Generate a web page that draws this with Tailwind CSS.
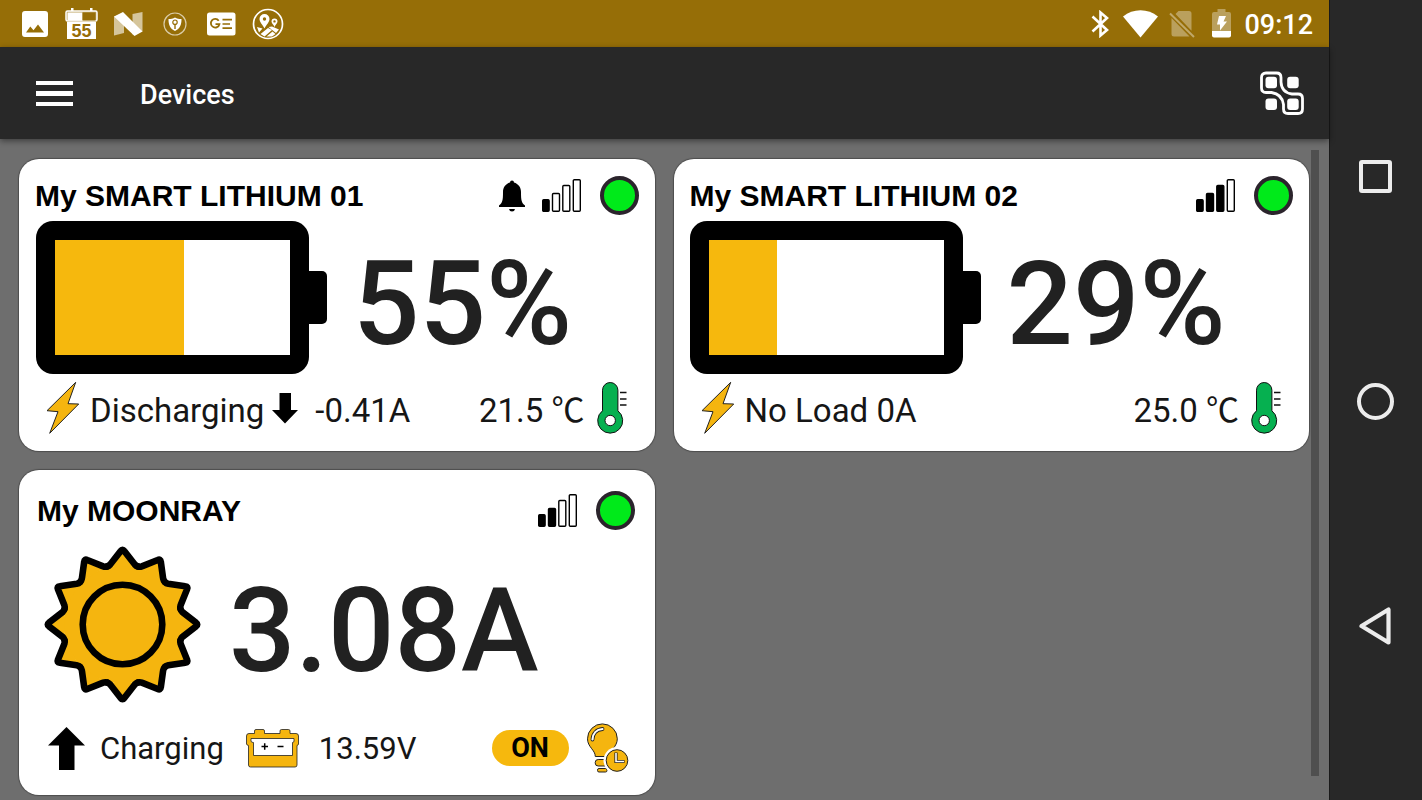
<!DOCTYPE html>
<html lang="en">
<head>
<meta charset="utf-8">
<meta name="viewport" content="width=device-width, initial-scale=1">
<title>Devices</title>
<script src="https://cdn.jsdelivr.net/npm/@tailwindcss/browser@4"></script>
</head>
<body class="flex h-screen overflow-hidden bg-[#282828] font-['Roboto','Noto_Sans_CJK_SC',sans-serif] text-[#161616]">

<!-- Shared symbols -->
<svg class="hidden" aria-hidden="true">
  <symbol id="bolt" viewBox="0 0 34 54"><path d="M29.7 1.3 22 22.7l10.7.3L3.7 52.3 12 30.7 1 29.7Z" fill="#f5b50f" stroke="#222" stroke-width="1"/></symbol>
  <symbol id="thermo" viewBox="0 0 31 52">
    <path d="M5.5 8.2a7.7 7.7 0 0 1 15.4 0V28.8a12.5 12.5 0 1 1-15.4 0Z" fill="#06b050" stroke="#111" stroke-width="1"/>
    <circle cx="13.2" cy="38.5" r="5.2" fill="#fff" stroke="#111" stroke-width="1"/>
    <path d="M23 10.5h6.500M23 17h6.500M23 23h6.500" stroke="#111" stroke-width="1.400"/>
  </symbol>
  <path id="ray" d="M-15.500-58Q-13.600-58.500-12.300-60L-1.800-73.500Q0-76 1.800-73.500L12.300-60Q13.600-58.500 15.500-58"/>
  <g id="rays3"><use href="#ray"/><use href="#ray" transform="rotate(30)"/><use href="#ray" transform="rotate(60)"/></g>
</svg>

<div class="flex min-w-0 flex-1 flex-col">

  <!-- Status bar -->
  <div class="flex h-[47px] shrink-0 items-center justify-between bg-[#966e07] pr-4 pl-[22px] text-white">
    <div class="flex items-center">
      <svg class="h-[26px] w-[26px]" viewBox="0 0 26 26"><path fill="#fff" fill-rule="evenodd" d="M3 0h20a3 3 0 0 1 3 3v20a3 3 0 0 1-3 3H3a3 3 0 0 1-3-3V3a3 3 0 0 1 3-3ZM4 21.500h18L16 13.500l-4.500 5.800-3.200-3.900Z"/></svg>
      <svg class="ml-[17px] h-8 w-[33px]" viewBox="0 0 33 32">
        <path d="M6 0h2.500v3H6ZM25 0h2.500v3H25Z" fill="#fff"/>
        <rect x="1" y="3" width="31" height="10" rx="1.500" fill="#fff" fill-opacity=".35" stroke="#fff" stroke-width="1.500"/>
        <rect x="2.500" y="4.500" width="15" height="8" fill="#fff"/><rect x="17.500" y="4.500" width="13" height="8" fill="#966e07"/>
        <rect x="2" y="14" width="29" height="17" fill="#fff"/>
        <text x="16.500" y="29" text-anchor="middle" font-family="Liberation Sans" font-weight="700" font-size="18" fill="#966e07">55</text>
      </svg>
      <svg class="ml-4 h-6 w-[29px]" viewBox="0 0 29 24"><path d="M0 4.500 10 2v19L0 23.500ZM18.500 2 28.500 0v19.500l-10 3Z" fill="#fff" fill-opacity=".6"/><path d="M0 4.500 9 0 28.500 19.500 20.500 24Z" fill="#fff"/></svg>
      <svg class="ml-5 h-6 w-6" viewBox="0 0 24 24"><circle cx="12" cy="12" r="11" fill="none" stroke="#fff" stroke-opacity=".65" stroke-width="1.200"/><path d="M12 5.500c2 1.300 4 1.500 6.500 1.500 0 6-1.500 9.500-6.500 12C7 16.500 5.500 13 5.500 7 8 7 10 6.800 12 5.500Z" fill="#fff"/><circle cx="12" cy="10.200" r="2.200" fill="none" stroke="#966e07" stroke-width="1.200"/><path d="M12 12.500V17" stroke="#966e07" stroke-width="1.400"/></svg>
      <svg class="ml-5 h-6 w-[29px]" viewBox="0 0 29 24"><rect y=".5" width="28.500" height="23" rx="2.500" fill="#fff"/><path d="M11.700 8.700A4.300 4.300 0 1 0 12.400 12.200H8.500" fill="none" stroke="#966e07" stroke-width="1.800"/><path d="M15.500 7.700h9.500M15.500 12h7.500M15.500 16.200h9.500" stroke="#966e07" stroke-width="1.700"/></svg>
      <svg class="ml-4 h-8 w-8" viewBox="0 0 32 32"><circle cx="16" cy="16" r="14.500" fill="none" stroke="#fff" stroke-width="1.700"/><path fill="#fff" fill-rule="evenodd" d="M12.500 6a5 5 0 0 1 5 5c0 3-3 5.500-5 9.500C10.500 16.500 7.500 14 7.500 11a5 5 0 0 1 5-5Zm0 3.300a1.700 1.700 0 1 0 0 3.400 1.700 1.700 0 0 0 0-3.400Z"/><path fill="#fff" fill-rule="evenodd" d="M22.500 10.500a3 3 0 0 1 3 3c0 1.800-2 3-3 5.500-1-2.500-3-3.700-3-5.500a3 3 0 0 1 3-3Zm0 1.700a1.200 1.200 0 1 0 0 2.400 1.200 1.200 0 0 0 0-2.400Z"/><path d="M5 19l5.500 1.500L7 24.500ZM8.500 26l7.500-6 4 2-7.500 6.500ZM16.500 19l3.500-.500 7 3-3 3.500ZM14.500 28.500l6-5 3 2.500-3.500 2.500Z" fill="#fff"/></svg>
    </div>
    <div class="flex items-center">
      <svg class="h-7 w-[19px]" viewBox="0 0 19 28"><path d="M1.500 6.500 16 20 9.500 25.500V2.500L16 8 1.500 21.500" fill="none" stroke="#fff" stroke-width="2.600"/></svg>
      <svg class="ml-[13px] h-7 w-[35px]" viewBox="0 0 35 28"><path d="M0 6.500C10-1.800 25-1.800 35 6.500L17.500 27.500Z" fill="#fff"/></svg>
      <svg class="ml-[11px] h-7 w-[26px]" viewBox="0 0 26 28"><path fill="#fff" fill-opacity=".35" d="M9.500 1H20a2.500 2.500 0 0 1 2.500 2.500v17.200L6.500 4ZM2.500 8 20.500 26.500H5A2.500 2.500 0 0 1 2.500 24Z"/><path d="M1 3.500 25 27" stroke="#fff" stroke-opacity=".4" stroke-width="2"/></svg>
      <svg class="ml-[17px] h-[29px] w-[19px]" viewBox="0 0 19 29"><path d="M5.500 0h8v3H17a2 2 0 0 1 2 2v17H0V5a2 2 0 0 1 2-2h3.500Z" fill="#fff" fill-opacity=".35"/><path d="M0 22h19v4.500a2 2 0 0 1-2 2H2a2 2 0 0 1-2-2Z" fill="#fff"/><path d="M7 7h7l-2.500 5.500H15L8 21.500V15.500H5Z" fill="#fff"/></svg>
      <time class="ml-[13px] pt-0.5 text-[27px] leading-8 font-medium">09:12</time>
    </div>
  </div>

  <!-- App bar -->
  <header class="z-10 flex h-[92px] shrink-0 items-center bg-[#282828] pr-6 pl-9 text-white shadow-[0_2px_6px_rgba(0,0,0,0.45)]">
    <button type="button" aria-label="Menu" class="flex w-[37px] flex-col gap-[6px]">
      <span class="h-[4px] bg-white"></span><span class="h-[5px] bg-white"></span><span class="h-[4px] bg-white"></span>
    </button>
    <h1 class="ml-[67px] flex-1 pt-1 text-[27px] leading-8 font-medium">Devices</h1>
    <button type="button" aria-label="Connections">
      <svg class="h-[46px] w-[46px]" viewBox="0 0 46 46">
        <path d="M7 3H17.500Q22 3 22 7.500V12Q22.500 22.500 33 24H39Q43.500 24 43.500 28.500V39Q43.500 43.500 39 43.500H29Q24.500 43.500 24.500 39V34.500Q23 24 12.500 22.500H7Q2.500 22.500 2.500 18V7.500Q2.500 3 7 3Z" fill="none" stroke="#fff" stroke-width="2.800"/>
        <g fill="#fff"><rect x="6.500" y="6.800" width="11.500" height="11.500" rx="3"/><rect x="28.200" y="6.800" width="11.500" height="11.500" rx="3"/><rect x="6.500" y="28.500" width="11.500" height="11.500" rx="3"/><rect x="28.200" y="28.500" width="11.500" height="11.500" rx="3"/></g>
      </svg>
    </button>
  </header>

  <!-- Device list -->
  <div class="relative flex min-h-0 flex-1 flex-col bg-[#6e6e6e]">
    <main class="min-h-0 flex-1 overflow-y-auto py-5 pr-5 pl-[19px] [scrollbar-width:none]">
      <div class="grid grid-cols-2 items-start gap-[19px]">

        <article class="rounded-[20px] bg-white pt-[17px] pb-4 shadow-[0_0_1px_1px_rgba(0,0,0,0.3)]">
          <div class="flex h-[39px] items-center pr-4 pl-4">
            <h2 class="flex-1 font-['Liberation_Sans',Arial,sans-serif] text-[30px] leading-9 font-bold text-black">My SMART LITHIUM 01</h2>
            <svg class="h-8 w-[26px]" viewBox="0 0 26 32"><path d="M11 2.500a2 2 0 0 1 4 0c4.500 1.300 7 5 7 9.500 0 8 .5 11 4 13.500v1.500H0v-1.500C3.500 23 4 20 4 12 4 7.500 6.500 3.800 11 2.500ZM10 29h6q-.5 2.500-3 2.500T10 29Z"/></svg>
            <svg class="ml-[17px] h-[33px] w-[39px]" viewBox="0 0 39 33" stroke="#000" stroke-width="1.400"><rect x=".7" y="20.700" width="6.400" height="11.600" rx="1"/><g fill="#fff"><rect x="10.500" y="14.500" width="7" height="17.800" rx="1"/><rect x="20.800" y="6.500" width="7" height="25.800" rx="1"/><rect x="31.300" y=".7" width="7" height="31.600" rx="1"/></g></svg>
            <span class="ml-[19px] size-[39px] rounded-full border-4 border-[#2b242c] bg-[#00ea1a]" role="img" aria-label="Connected"></span>
          </div>
          <div class="mt-[6px] flex items-center pl-[17px]">
            <div class="h-[153px] w-[273px] rounded-[17px] bg-black p-[19px]"><div class="h-full bg-white"><div class="h-full bg-[#f6b80d]" style="width:55%"></div></div></div>
            <div class="h-[53px] w-[18px] rounded-r-[5px] bg-black"></div>
            <p class="ml-[26px] pt-3 text-[117px] leading-[120px] font-medium text-[#212121]">55%</p>
          </div>
          <div class="mt-[7px] flex items-center pr-[27px] pl-[27px] text-[33px] leading-10">
            <svg class="h-[54px] w-[34px]"><use href="#bolt"/></svg>
            <p class="ml-[10px] pt-1.5">Discharging</p>
            <svg class="ml-2 h-[31px] w-[26px]" viewBox="0 0 26 31"><path d="M7.500 0h11.500v17H26L13 30.500 0 17h7.500Z"/></svg>
            <p class="ml-[17px] flex-1 pt-1.5">-0.41A</p>
            <p class="pt-1.5">21.5 ℃</p>
            <svg class="ml-3 h-[52px] w-[31px]"><use href="#thermo"/></svg>
          </div>
        </article>

        <article class="rounded-[20px] bg-white pt-[17px] pb-4 shadow-[0_0_1px_1px_rgba(0,0,0,0.3)]">
          <div class="flex h-[39px] items-center pr-4 pl-4">
            <h2 class="flex-1 font-['Liberation_Sans',Arial,sans-serif] text-[30px] leading-9 font-bold text-black">My SMART LITHIUM 02</h2>
            <svg class="h-[33px] w-[39px]" viewBox="0 0 39 33" stroke="#000" stroke-width="1.400"><rect x=".7" y="20.700" width="6.400" height="11.600" rx="1"/><rect x="10.500" y="14.500" width="7" height="17.800" rx="1"/><rect x="20.800" y="6.500" width="7" height="25.800" rx="1"/><rect x="31.300" y=".7" width="7" height="31.600" rx="1" fill="#fff"/></svg>
            <span class="ml-[19px] size-[39px] rounded-full border-4 border-[#2b242c] bg-[#00ea1a]" role="img" aria-label="Connected"></span>
          </div>
          <div class="mt-[6px] flex items-center pl-4">
            <div class="h-[153px] w-[273px] rounded-[17px] bg-black p-[19px]"><div class="h-full bg-white"><div class="h-full bg-[#f6b80d]" style="width:29%"></div></div></div>
            <div class="h-[53px] w-[18px] rounded-r-[5px] bg-black"></div>
            <p class="ml-[26px] pt-3 text-[117px] leading-[120px] font-medium text-[#212121]">29%</p>
          </div>
          <div class="mt-[7px] flex items-center pr-[27px] pl-[27px] text-[33px] leading-10">
            <svg class="h-[54px] w-[34px]"><use href="#bolt"/></svg>
            <p class="ml-[10px] flex-1 pt-1.5">No Load 0A</p>
            <p class="pt-1.5">25.0 ℃</p>
            <svg class="ml-3 h-[52px] w-[31px]"><use href="#thermo"/></svg>
          </div>
        </article>

        <article class="rounded-[20px] bg-white pt-[21px] pb-[22px] shadow-[0_0_1px_1px_rgba(0,0,0,0.3)]">
          <div class="flex h-[39px] items-center pr-5 pl-[18px]">
            <h2 class="flex-1 font-['Liberation_Sans',Arial,sans-serif] text-[30px] leading-9 font-bold text-black">My MOONRAY</h2>
            <svg class="h-[33px] w-[39px]" viewBox="0 0 39 33" stroke="#000" stroke-width="1.400"><rect x=".7" y="20.700" width="6.400" height="11.600" rx="1"/><rect x="10.500" y="14.500" width="7" height="17.800" rx="1"/><g fill="#fff"><rect x="20.800" y="6.500" width="7" height="25.800" rx="1"/><rect x="31.300" y=".7" width="7" height="31.600" rx="1"/></g></svg>
            <span class="ml-[19px] size-[39px] rounded-full border-4 border-[#2b242c] bg-[#00ea1a]" role="img" aria-label="Connected"></span>
          </div>
          <div class="mt-4 flex items-center pl-[25px]">
            <svg class="size-[157px]" viewBox="-78.500 -78.500 157 157" fill="#f5b50f" stroke="#000" stroke-width="6.600" stroke-linecap="round">
              <circle r="59" stroke="none"/>
              <use href="#rays3"/><use href="#rays3" transform="rotate(90)"/><use href="#rays3" transform="rotate(180)"/><use href="#rays3" transform="rotate(270)"/>
              <circle r="39.800"/>
            </svg>
            <p class="ml-7 pt-3 text-[117px] leading-[120px] font-medium text-[#212121]">3.08A</p>
          </div>
          <div class="mt-5 flex h-[50px] items-center pr-[26px] pl-[29px] text-[31px] leading-10">
            <svg class="h-[43px] w-[37px]" viewBox="0 0 37 43"><path d="M18.500 0 37 18.500H26.500V43H11V18.500H0Z"/></svg>
            <p class="ml-[15px] pt-0.5">Charging</p>
            <svg class="ml-[22px] h-[39px] w-[53px]" viewBox="0 0 53 39" stroke="#222" stroke-width=".8"><path d="M8.500 4.500V2q0-1.500 1.500-1.500h7q1.500 0 1.500 1.500v2.500H34V2q0-1.500 1.500-1.500h7Q44 .5 44 2v2.500h6q2.500 0 2.500 2.500v8q0 1-1.500 1.500V36q0 2-2 2H4.500q-2 0-2-2V16.500Q.5 16 .5 15V7Q.5 4.500 3 4.500Z" fill="#f5b50f"/><path d="M5 9.500h43V12q0 1.500-1.500 1.500V26.500h-39V13.500Q5 13.500 5 12Z" fill="#fff"/><path d="M15.500 17.500h6.500M18.700 14.300v6.500M31.500 17.500h6" stroke="#000" stroke-width="1.500"/></svg>
            <p class="ml-5 flex-1 pt-0.5">13.59V</p>
            <button type="button" class="flex h-9 w-[77px] items-center justify-center rounded-full bg-[#f6b80d] text-[27px] font-bold text-black">ON</button>
            <svg class="ml-[18px] h-[50px] w-[42px]" viewBox="0 0 42 50" fill="#f5b50f" stroke="#222" stroke-width="1">
              <path d="M8.300 33.500C8.300 27 .5 24 .5 15.800a14.900 14.900 0 0 1 29.800 0c0 8.200-7.800 11.200-7.800 17.700Z"/>
              <rect x="8.200" y="36.500" width="14" height="6.500" rx="3"/><rect x="10.500" y="45.500" width="9.500" height="3.500" rx="1.500"/>
              <path d="M5.500 16.500C5.700 10.500 9.500 6.500 15.500 6" fill="none" stroke="#222" stroke-width="3.800" stroke-linecap="round"/><path d="M5.500 16.500C5.700 10.500 9.500 6.500 15.500 6" fill="none" stroke="#fff" stroke-width="2.200" stroke-linecap="round"/>
              <circle cx="30" cy="37.500" r="13.500" fill="#fff" stroke="none"/><circle cx="30" cy="37.500" r="10.800"/>
              <path d="M29 29.500v9h8.500" fill="none" stroke="#222" stroke-width="3.200"/><path d="M29 30v8.500h8" fill="none" stroke="#fff" stroke-width="1.600"/>
            </svg>
          </div>
        </article>

      </div>
    </main>
    <!-- Scroll indicator -->
    <div class="absolute top-[11px] right-[10px] bottom-6 w-2 bg-[#4f4f4f]"></div>
  </div>
</div>

<!-- System navigation -->
<nav aria-label="System" class="flex w-[93px] shrink-0 flex-col border-l border-[#1a1a1a] pt-16 pr-[2px] pb-[62px]">
  <button type="button" aria-label="Recent apps" class="flex flex-1 items-center justify-center"><span class="size-[33px] rounded-[3px] border-4 border-[#ececec]"></span></button>
  <button type="button" aria-label="Home" class="flex flex-1 items-center justify-center"><span class="size-[37px] rounded-full border-4 border-[#ececec]"></span></button>
  <button type="button" aria-label="Back" class="flex flex-1 items-center justify-center"><svg class="h-[38px] w-8" viewBox="0 0 32 38"><path d="M29.500 2.500v33L2.500 19Z" fill="none" stroke="#ececec" stroke-width="4.200" stroke-linejoin="round"/></svg></button>
</nav>
</body>
</html>
